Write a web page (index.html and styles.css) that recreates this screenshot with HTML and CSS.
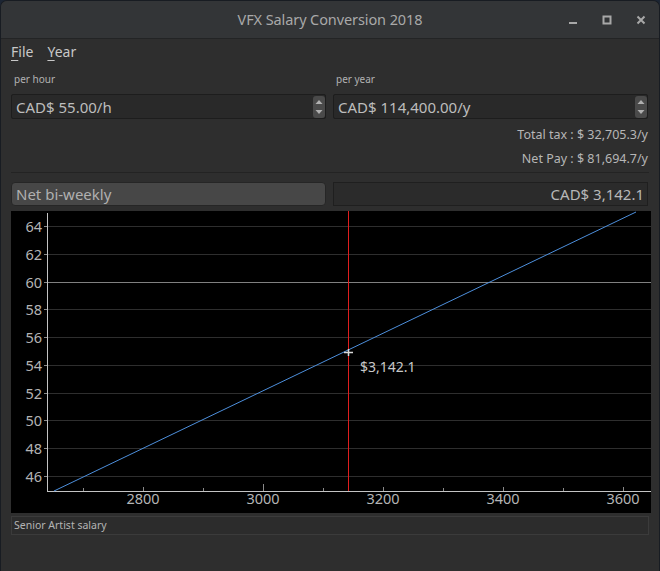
FILE: index.html
```html
<!DOCTYPE html>
<html>
<head>
<meta charset="utf-8">
<title>VFX Salary Conversion 2018</title>
<link rel="stylesheet" href="styles.css">
</head>
<body>
<div class="window">
  <header class="titlebar">
    <span></span>
    <span class="title">VFX Salary Conversion 2018</span>
    <div class="controls">
      <svg class="ctl" width="10" height="10" viewBox="0 0 10 10"><rect x="1" y="7" width="8" height="2" fill="#a8a8a8"/></svg>
      <svg class="ctl" width="10" height="10" viewBox="0 0 10 10"><rect x="1.5" y="1.5" width="7" height="7" fill="none" stroke="#a8a8a8" stroke-width="2"/></svg>
      <svg class="ctl" width="10" height="10" viewBox="0 0 10 10"><path d="M1.5 1.5 L8.5 8.5 M8.5 1.5 L1.5 8.5" stroke="#a8a8a8" stroke-width="2"/></svg>
    </div>
  </header>
  <nav class="menubar">
    <span class="menu"><u>F</u>ile</span>
    <span class="menu"><u>Y</u>ear</span>
  </nav>
  <main class="content">
    <div class="inputs">
      <div class="group">
        <div class="cap">per hour</div>
        <div class="spin">
          <span class="val">CAD$ 55.00/h</span>
          <span class="spinbtn"><svg width="12" height="22" viewBox="0 0 12 22"><path d="M2.5 8 L6 4 L9.5 8 Z" fill="#b0b0b0"/><path d="M2.5 14 L6 18 L9.5 14 Z" fill="#b0b0b0"/></svg></span>
        </div>
      </div>
      <div class="group">
        <div class="cap">per year</div>
        <div class="spin">
          <span class="val">CAD$ 114,400.00/y</span>
          <span class="spinbtn"><svg width="12" height="22" viewBox="0 0 12 22"><path d="M2.5 8 L6 4 L9.5 8 Z" fill="#b0b0b0"/><path d="M2.5 14 L6 18 L9.5 14 Z" fill="#b0b0b0"/></svg></span>
        </div>
      </div>
    </div>
    <div class="summary">
      <div class="sline">Total tax : $ 32,705.3/y</div>
      <div class="sline">Net Pay : $ 81,694.7/y</div>
    </div>
    <div class="sep"></div>
    <div class="outputs">
      <div class="combo">Net bi-weekly</div>
      <div class="result">CAD$ 3,142.1</div>
    </div>
    <div class="chart">
      <svg width="640" height="302" viewBox="0 0 640 302">
        <rect x="0" y="0" width="640" height="302" fill="#000"/>
        <g stroke="#2e2e2e" stroke-width="1">
          <line x1="36" y1="15.5" x2="640" y2="15.5"/>
          <line x1="36" y1="43.5" x2="640" y2="43.5"/>
          <line x1="36" y1="98.5" x2="640" y2="98.5"/>
          <line x1="36" y1="126.5" x2="640" y2="126.5"/>
          <line x1="36" y1="154.5" x2="640" y2="154.5"/>
          <line x1="36" y1="182.5" x2="640" y2="182.5"/>
          <line x1="36" y1="209.5" x2="640" y2="209.5"/>
          <line x1="36" y1="237.5" x2="640" y2="237.5"/>
          <line x1="36" y1="265.5" x2="640" y2="265.5"/>
        </g>
        <line x1="36" y1="71.5" x2="640" y2="71.5" stroke="#808080" stroke-width="1"/>
        <g stroke="#8a8a8a" stroke-width="1">
          <line x1="33" y1="15.5" x2="36" y2="15.5"/>
          <line x1="33" y1="43.5" x2="36" y2="43.5"/>
          <line x1="33" y1="71.5" x2="36" y2="71.5"/>
          <line x1="33" y1="98.5" x2="36" y2="98.5"/>
          <line x1="33" y1="126.5" x2="36" y2="126.5"/>
          <line x1="33" y1="154.5" x2="36" y2="154.5"/>
          <line x1="33" y1="182.5" x2="36" y2="182.5"/>
          <line x1="33" y1="209.5" x2="36" y2="209.5"/>
          <line x1="33" y1="237.5" x2="36" y2="237.5"/>
          <line x1="33" y1="265.5" x2="36" y2="265.5"/>
          <line x1="72.5" y1="277" x2="72.5" y2="280"/>
          <line x1="192.5" y1="277" x2="192.5" y2="280"/>
          <line x1="312.5" y1="277" x2="312.5" y2="280"/>
          <line x1="432.5" y1="277" x2="432.5" y2="280"/>
          <line x1="552.5" y1="277" x2="552.5" y2="280"/>
          <line x1="132.5" y1="276" x2="132.5" y2="280"/>
          <line x1="252.5" y1="273" x2="252.5" y2="280"/>
          <line x1="372.5" y1="276" x2="372.5" y2="280"/>
          <line x1="492.5" y1="276" x2="492.5" y2="280"/>
          <line x1="612.5" y1="276" x2="612.5" y2="280"/>
        </g>
        <g stroke="#c4c4c4" stroke-width="1">
          <line x1="36.5" y1="2" x2="36.5" y2="280"/>
          <line x1="36" y1="280.5" x2="640" y2="280.5"/>
        </g>
        <g class="ylab" fill="#b4b4b4" text-anchor="end">
          <text x="31" y="20.5">64</text>
          <text x="31" y="48.5">62</text>
          <text x="31" y="76.5">60</text>
          <text x="31" y="103.5">58</text>
          <text x="31" y="131.5">56</text>
          <text x="31" y="159.5">54</text>
          <text x="31" y="187.5">52</text>
          <text x="31" y="214.5">50</text>
          <text x="31" y="242.5">48</text>
          <text x="31" y="270.5">46</text>
        </g>
        <g class="xlab" fill="#b4b4b4" text-anchor="middle">
          <text x="132" y="293">2800</text>
          <text x="252" y="293">3000</text>
          <text x="372" y="293">3200</text>
          <text x="492" y="293">3400</text>
          <text x="612" y="293">3600</text>
        </g>
        <line x1="43" y1="280" x2="625" y2="1" stroke="#4d8fdc" stroke-width="1"/>
        <line x1="337.5" y1="0" x2="337.5" y2="280" stroke="#e01e1e" stroke-width="1"/>
        <g stroke="#d8d8d8" stroke-width="1.5">
          <line x1="333" y1="141.5" x2="342" y2="141.5"/>
          <line x1="337.5" y1="138" x2="337.5" y2="145"/>
        </g>
        <text class="tip" x="349" y="160.5" fill="#c8c8c8">$3,142.1</text>
      </svg>
    </div>
    <div class="status">Senior Artist salary</div>
  </main>
</div>
</body>
</html>
```
FILE: styles.css
```css
html, body {
  margin: 0;
  padding: 0;
  background: #1c2533;
}
body {
  font-family: "Noto Sans", "DejaVu Sans", sans-serif;
  color: #bcbcbc;
}
.window {
  width: 660px;
  height: 571px;
  box-sizing: border-box;
  background: #2e2e2e;
  border-radius: 7px 7px 0 0;
  overflow: hidden;
  border: 1px solid #181c22;
  border-bottom: 0;
}
.titlebar {
  height: 37px;
  background: #333537;
  border-bottom: 1px solid #232425;
  display: grid;
  grid-template-columns: 1fr auto 1fr;
  align-items: center;
}
.title {
  font-size: 14.5px;
  color: #a9a9a9;
  letter-spacing: -0.1px;
  padding-bottom: 2px;
}
.controls {
  display: flex;
  justify-content: flex-end;
  align-items: center;
  gap: 24px;
  padding-right: 13px;
  padding-top: 1px;
}
.ctl { display: block; }
.menubar {
  height: 26px;
  display: flex;
  align-items: center;
  gap: 14px;
  padding-left: 10px;
  padding-bottom: 2px;
  box-sizing: border-box;
  font-size: 14px;
  color: #c8c8c8;
}
.menu u { text-decoration-thickness: 1px; text-underline-offset: 3px; }
.content {
  padding: 0 10px;
}
.inputs {
  display: grid;
  grid-template-columns: 1fr 1fr;
  gap: 7px;
  margin-right: 1px;
}
.cap {
  font-size: 10px;
  color: #b2b2b2;
  height: 20px;
  line-height: 20px;
  padding: 4px 0 0 3px;
  margin-bottom: 5px;
}
.spin {
  height: 25px;
  box-sizing: border-box;
  background: #292929;
  border: 1px solid #1d1d1d;
  border-radius: 2px;
  display: flex;
  align-items: center;
  justify-content: space-between;
  padding-left: 4px;
}
.val {
  font-size: 15px;
  color: #bdbdbd;
}
.spinbtn {
  width: 12px;
  height: 22px;
  background: #4a4a4a;
  border-radius: 3px;
  display: block;
}
.spinbtn svg { display: block; }
.summary {
  margin-top: 4px;
  margin-right: 1px;
  text-align: right;
  font-size: 12.5px;
  color: #b6b6b6;
}
.sline {
  height: 24px;
  line-height: 24px;
}
.sep {
  height: 1px;
  background: #232323;
  margin-top: 1px;
}
.outputs {
  display: grid;
  grid-template-columns: 1fr 1fr;
  gap: 7px;
  margin-top: 9px;
  margin-right: 1px;
}
.combo {
  height: 24px;
  box-sizing: border-box;
  background: #474747;
  border: 1px solid #262626;
  border-radius: 4px;
  font-size: 15px;
  line-height: 22px;
  padding-left: 4px;
  color: #b0b0b0;
}
.result {
  height: 24px;
  box-sizing: border-box;
  background: #2b2b2b;
  border: 1px solid #1f1f1f;
  font-size: 15px;
  line-height: 22px;
  text-align: right;
  padding-right: 3px;
  color: #b8b8b8;
}
.chart {
  margin-top: 5px;
  height: 302px;
}
.chart svg { display: block; }
.ylab text, .xlab text {
  font-family: "Noto Sans", "DejaVu Sans", sans-serif;
  font-size: 14.5px;
}
.tip {
  font-family: "Noto Sans", "DejaVu Sans", sans-serif;
  font-size: 14px;
}
.status {
  margin-top: 3px;
  height: 19px;
  box-sizing: border-box;
  border: 1px solid #3b3b3b;
  background: #2c2c2c;
  font-size: 10.5px;
  line-height: 17px;
  padding-left: 2px;
  color: #b4b4b4;
}
```
